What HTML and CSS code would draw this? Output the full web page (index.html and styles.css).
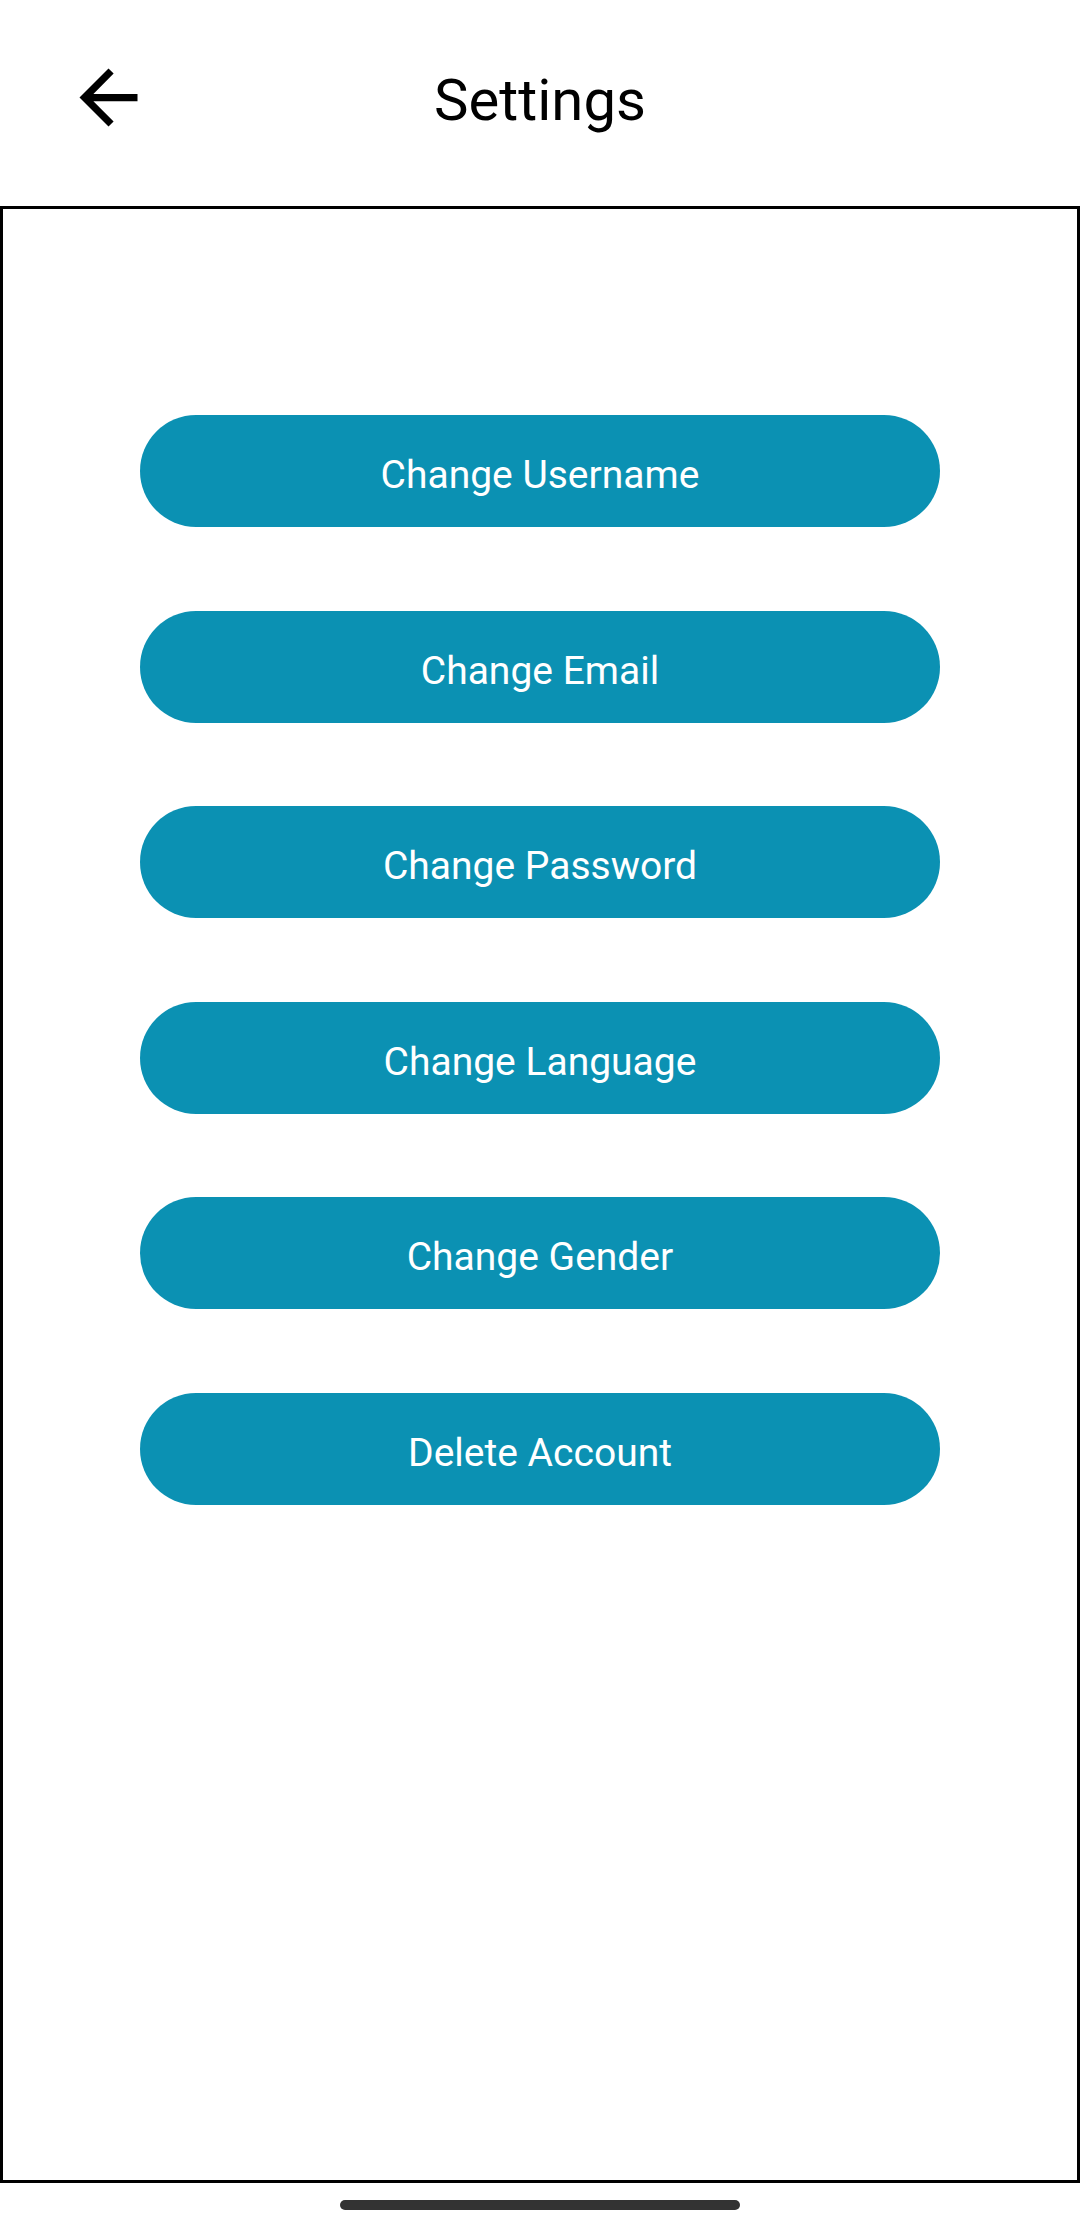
FILE: index.html
```html
<!DOCTYPE html>
<html lang="en">
<head>
<meta charset="utf-8">
<title>Settings</title>
<link rel="stylesheet" href="styles.css">
</head>
<body>
<div class="screen">
  <header class="topbar">
    <svg class="back" viewBox="0 0 24 24" width="87" height="87" aria-label="Back">
      <path d="M20 11H7.83l5.59-5.59L12 4l-8 8 8 8 1.41-1.41L7.83 13H20v-2z" fill="#000"/>
    </svg>
    <h1 class="title">Settings</h1>
    <div class="spacer"></div>
  </header>
  <main class="panel">
    <button class="action">Change Username</button>
    <button class="action">Change Email</button>
    <button class="action">Change Password</button>
    <button class="action">Change Language</button>
    <button class="action">Change Gender</button>
    <button class="action">Delete Account</button>
  </main>
  <footer class="navbar">
    <div class="handle"></div>
  </footer>
</div>
</body>
</html>
```

FILE: styles.css
```css
* { box-sizing: border-box; }
html, body {
  margin: 0;
  padding: 0;
  background: #fff;
  font-family: Roboto, "Noto Sans", sans-serif;
}
.screen {
  width: 1080px;
  height: 2227px;
  display: flex;
  flex-direction: column;
}
.topbar {
  height: 206px;
  display: flex;
  align-items: flex-start;
  flex-shrink: 0;
}
.back {
  margin-left: 65px;
  margin-top: 54px;
  flex-shrink: 0;
}
.title {
  flex: 1;
  margin: 66px 0 0 0;
  font-size: 58px;
  font-weight: 400;
  line-height: normal;
  text-align: center;
  color: #000;
}
.spacer {
  width: 152px;
  flex-shrink: 0;
}
.panel {
  height: 1977px;
  border: 3px solid #000;
  display: flex;
  flex-direction: column;
  align-items: center;
  gap: 83.6px;
  padding-top: 206px;
  flex-shrink: 0;
}
.action {
  width: 800px;
  height: 112px;
  border: none;
  border-radius: 56px;
  background: #0b91b3;
  color: #fff;
  font-family: Roboto, "Noto Sans", sans-serif;
  font-size: 39px;
  font-weight: 400;
  padding: 8px 0 0 0;
  display: flex;
  align-items: center;
  justify-content: center;
  flex-shrink: 0;
}
.navbar {
  flex: 1;
  display: flex;
  justify-content: center;
  padding-top: 17px;
}
.handle {
  width: 400px;
  height: 10px;
  border-radius: 5px;
  background: #333;
}
```
